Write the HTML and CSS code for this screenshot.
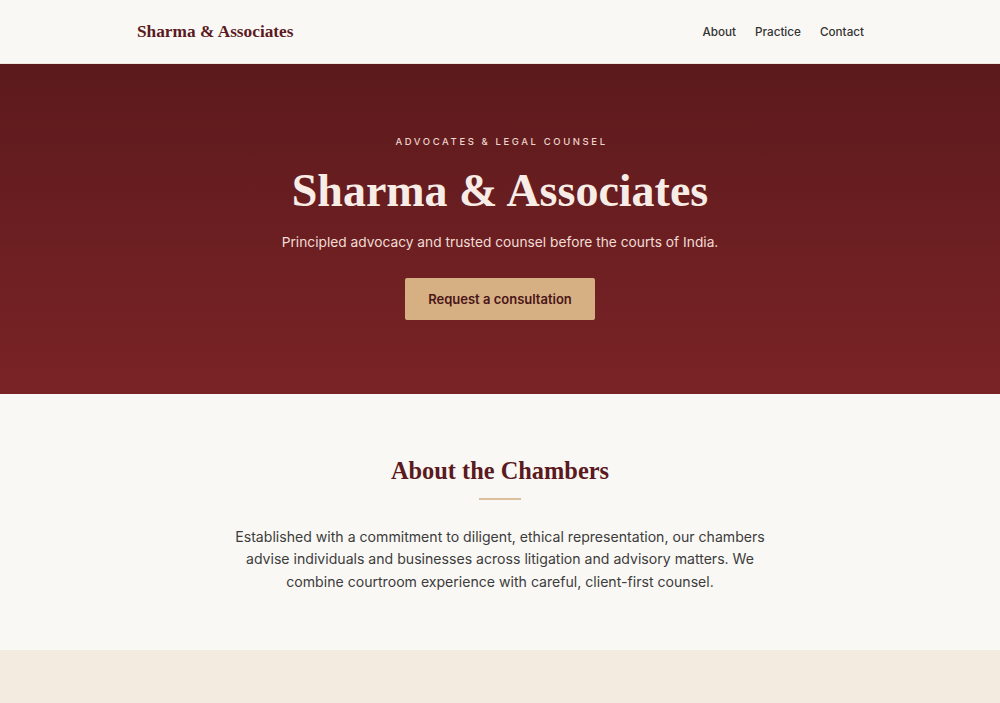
FILE: index.html
```html
<!DOCTYPE html>
<html lang="en">
<head>
<meta charset="utf-8">
<title>Sharma &amp; Associates</title>
<link rel="stylesheet" href="styles.css">
</head>
<body>
<header class="site-header">
  <div class="container header-inner">
    <a class="logo" href="#">Sharma &amp; Associates</a>
    <nav class="nav">
      <a href="#">About</a>
      <a href="#">Practice</a>
      <a href="#">Contact</a>
    </nav>
  </div>
</header>
<section class="hero">
  <p class="eyebrow">ADVOCATES &amp; LEGAL COUNSEL</p>
  <h1 class="hero-title">Sharma &amp; Associates</h1>
  <p class="hero-sub">Principled advocacy and trusted counsel before the courts of India.</p>
  <a class="btn" href="#">Request a consultation</a>
</section>
<section class="about">
  <h2 class="section-title">About the Chambers</h2>
  <div class="divider"></div>
  <p class="about-text">Established with a commitment to diligent, ethical representation, our chambers advise individuals and businesses across litigation and advisory matters. We combine courtroom experience with careful, client-first counsel.</p>
</section>
<section class="practice"></section>
</body>
</html>
```
FILE: styles.css
```css
* { box-sizing: border-box; }
html, body { margin: 0; padding: 0; }
body {
  background: #faf8f5;
  font-family: Inter, "Noto Sans", sans-serif;
  color: #333;
}
a { text-decoration: none; }
.container { width: 728px; margin: 0 auto; }
.site-header {
  height: 64px;
  background: #faf8f5;
  border-bottom: 1px solid #efe6de;
}
.header-inner {
  height: 100%;
  display: flex;
  align-items: center;
  justify-content: space-between;
}
.logo {
  font-family: "Liberation Serif", "DejaVu Serif", serif;
  font-weight: 700;
  font-size: 17.3px;
  color: #5a1a1e;
  padding-left: 1px;
}
.nav { display: flex; gap: 19px; }
.nav a {
  font-size: 11.7px;
  font-weight: 500;
  color: #333;
}
.hero {
  height: 330px;
  background: linear-gradient(180deg, #5c1a1c 0%, #7a2326 100%);
  display: flex;
  flex-direction: column;
  align-items: center;
  padding-top: 72px;
  text-align: center;
}
.eyebrow {
  margin: 0;
  font-size: 9.5px;
  letter-spacing: 2.6px;
  color: #ecd3cc;
  font-weight: 500;
  line-height: 12px;
  padding-left: 3px;
}
.hero-title {
  margin: 16px 0 0;
  font-family: "Liberation Serif", "DejaVu Serif", serif;
  font-weight: 700;
  font-size: 46px;
  line-height: 54px;
  color: #f8ece6;
}
.hero-sub {
  margin: 14px 0 0;
  font-size: 13.75px;
  line-height: 20px;
  color: #f0dcd5;
}
.btn {
  margin-top: 26px;
  width: 190px;
  height: 42px;
  display: flex;
  align-items: center;
  justify-content: center;
  background: #d6b083;
  color: #4a1518;
  font-size: 13px;
  font-weight: 600;
  border-radius: 2px;
}
.about {
  height: 256px;
  display: flex;
  flex-direction: column;
  align-items: center;
  padding-top: 55px;
  text-align: center;
  background: #faf8f5;
}
.section-title {
  margin: 0;
  font-family: "Liberation Serif", "DejaVu Serif", serif;
  font-weight: 700;
  font-size: 24.4px;
  line-height: 44px;
  color: #5a1a1e;
}
.divider {
  margin-top: 5px;
  width: 42px;
  height: 2px;
  background: #dcbf9c;
}
.about-text {
  margin: 26px 0 0;
  width: 535px;
  font-size: 14.1px;
  line-height: 22.3px;
  color: #3c3c3c;
}
.practice {
  height: 60px;
  background: #f4ebe0;
}
```
